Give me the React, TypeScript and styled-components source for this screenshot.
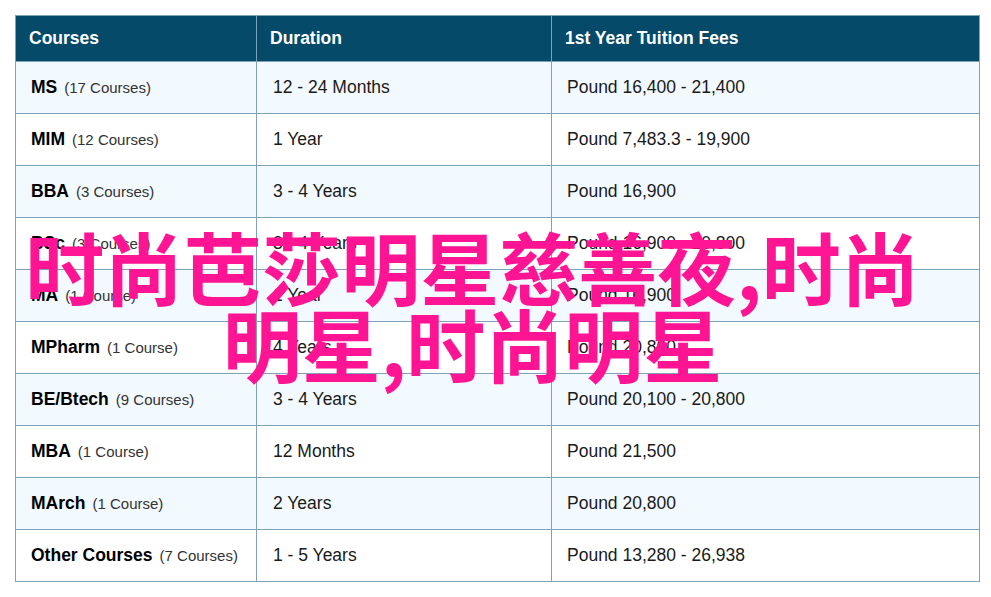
import styled, { createGlobalStyle } from 'styled-components';

const GlobalStyle = createGlobalStyle`
  html, body {
    margin: 0;
    padding: 0;
    background: #ffffff;
  }
  body {
    font-family: "Liberation Sans", Arial, sans-serif;
  }
`;

const Page = styled.div`
  position: relative;
  width: 991px;
  height: 597px;
  padding: 15px 0 0 15px;
  box-sizing: border-box;
  overflow: hidden;
`;

const Table = styled.table`
  width: 964px;
  table-layout: fixed;
  border-collapse: collapse;
  border: 1px solid #7ea3b8;
`;

const HeadCell = styled.th<{ $width: number; $indent: number }>`
  width: ${props => props.$width}px;
  height: 46px;
  box-sizing: border-box;
  padding: 0 0 0 ${props => props.$indent}px;
  background: #054a69;
  border: 1px solid #7ea3b8;
  color: #ffffff;
  font-size: 17.5px;
  font-weight: 700;
  text-align: left;
`;

const Row = styled.tr<{ $striped: boolean }>`
  height: 52px;
  background: ${props => (props.$striped ? '#f2f9ff' : '#ffffff')};
`;

const Cell = styled.td<{ $indent: number }>`
  box-sizing: border-box;
  padding: 0 0 0 ${props => props.$indent}px;
  border: 1px solid #7ea3b8;
  color: #1a1a1a;
  font-size: 17.5px;
`;

const CourseName = styled.strong`
  color: #000000;
  font-size: 17.5px;
  font-weight: 700;
`;

const CourseCount = styled.span`
  margin-left: 7px;
  color: #333333;
  font-size: 15px;
`;

const Banner = styled.div`
  position: absolute;
  top: 227px;
  left: 0;
  width: 945px;
  color: #ff1493;
  font-family: "Noto Sans CJK SC", "Liberation Sans", sans-serif;
  font-size: 79px;
  font-weight: 700;
  line-height: 77px;
  text-align: center;
`;

const courses = [
  { name: 'MS', count: '(17 Courses)', duration: '12 - 24 Months', fees: 'Pound 16,400 - 21,400' },
  { name: 'MIM', count: '(12 Courses)', duration: '1 Year', fees: 'Pound 7,483.3 - 19,900' },
  { name: 'BBA', count: '(3 Courses)', duration: '3 - 4 Years', fees: 'Pound 16,900' },
  { name: 'BSc', count: '(3 Courses)', duration: '3 - 4 Years', fees: 'Pound 16,900 - 20,800' },
  { name: 'MA', count: '(1 Course)', duration: '1 Year', fees: 'Pound 16,900' },
  { name: 'MPharm', count: '(1 Course)', duration: '4 Years', fees: 'Pound 20,800' },
  { name: 'BE/Btech', count: '(9 Courses)', duration: '3 - 4 Years', fees: 'Pound 20,100 - 20,800' },
  { name: 'MBA', count: '(1 Course)', duration: '12 Months', fees: 'Pound 21,500' },
  { name: 'MArch', count: '(1 Course)', duration: '2 Years', fees: 'Pound 20,800' },
  { name: 'Other Courses', count: '(7 Courses)', duration: '1 - 5 Years', fees: 'Pound 13,280 - 26,938' },
];

export default function App() {
  return (
    <Page>
      <GlobalStyle />
      <Table>
        <thead>
          <tr>
            <HeadCell $width={241} $indent={13}>Courses</HeadCell>
            <HeadCell $width={295} $indent={13}>Duration</HeadCell>
            <HeadCell $width={428} $indent={13}>1st Year Tuition Fees</HeadCell>
          </tr>
        </thead>
        <tbody>
          {courses.map((course, index) => (
            <Row key={course.name} $striped={index % 2 === 0}>
              <Cell $indent={15}>
                <CourseName>{course.name}</CourseName>
                <CourseCount>{course.count}</CourseCount>
              </Cell>
              <Cell $indent={16}>{course.duration}</Cell>
              <Cell $indent={15}>{course.fees}</Cell>
            </Row>
          ))}
        </tbody>
      </Table>
      <Banner>
        时尚芭莎明星慈善夜,时尚
        <br />
        明星,时尚明星
      </Banner>
    </Page>
  );
}
